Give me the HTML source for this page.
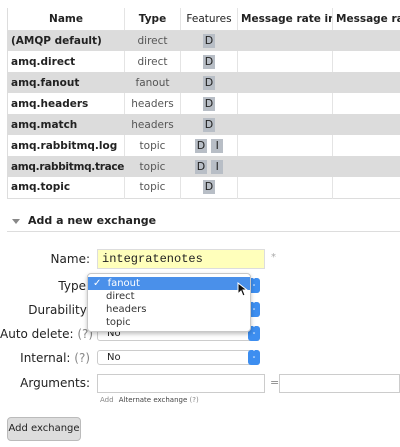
<!DOCTYPE html><html><head><style>
*{box-sizing:border-box}body{margin:0;width:400px;height:447px;overflow:hidden;background:#fff;font-family:"DejaVu Sans","Liberation Sans",sans-serif;color:#222;position:relative}
.a{position:absolute;white-space:nowrap}
table{position:absolute;left:7px;top:8px;border-collapse:collapse;font-size:10.5px;width:393px;table-layout:fixed}
td,th{height:21px;padding:0 3px;border-left:1px solid #e4e4e4;white-space:nowrap;overflow:hidden}
th{font-weight:bold;border-bottom:1px solid #ddd;height:22px}
td:first-child,th:first-child{text-align:left;font-weight:bold;border-left:1px solid #ddd}
th:first-child{text-align:center}
tr.g td{background:#dcdcdc;border-left-color:#dcdcdc}
td.t{text-align:center;color:#555}
td.f{text-align:center}
.b{display:inline-block;background:#b8bec6;padding:0 2px;line-height:14px;font-size:11px;font-weight:normal;color:#222;margin:0 2px;min-width:12px}
.l{font-size:12px;text-align:right;width:90px;left:0}
.sel{position:absolute;left:97px;width:163px;height:15px;border:1px solid #ccc;border-radius:3px;font-size:10px;padding-left:9px;line-height:13px;background:#fff}
.st{position:absolute;right:-1px;top:-1px;width:12px;height:15px;background:#3d8ef0;border-radius:3px;color:#fff;font-size:7px;text-align:center;line-height:7px}
.in{position:absolute;border:1px solid #ccc;height:19px;background:#fff}
</style></head><body>
<table>
<colgroup><col style="width:117px"><col style="width:56px"><col style="width:57px"><col style="width:95px"><col style="width:68px"></colgroup>
<tr style="background:#fff"><th>Name</th><th>Type</th><th style="font-weight:normal">Features</th><th>Message rate in</th><th style="text-align:left">Message rate out</th></tr>
<tr class="g"><td>(AMQP default)</td><td class="t">direct</td><td class="f"><span class="b">D</span></td><td></td><td></td></tr>
<tr><td>amq.direct</td><td class="t">direct</td><td class="f"><span class="b">D</span></td><td></td><td></td></tr>
<tr class="g"><td>amq.fanout</td><td class="t">fanout</td><td class="f"><span class="b">D</span></td><td></td><td></td></tr>
<tr><td>amq.headers</td><td class="t">headers</td><td class="f"><span class="b">D</span></td><td></td><td></td></tr>
<tr class="g"><td>amq.match</td><td class="t">headers</td><td class="f"><span class="b">D</span></td><td></td><td></td></tr>
<tr><td>amq.rabbitmq.log</td><td class="t">topic</td><td class="f"><span class="b">D</span><span class="b">I</span></td><td></td><td></td></tr>
<tr class="g"><td style="letter-spacing:-0.3px">amq.rabbitmq.trace</td><td class="t">topic</td><td class="f"><span class="b">D</span><span class="b">I</span></td><td></td><td></td></tr>
<tr style="border-bottom:1px solid #ddd"><td>amq.topic</td><td class="t">topic</td><td class="f"><span class="b">D</span></td><td></td><td></td></tr>
</table>
<div class="a" style="left:12px;top:219px;width:0;height:0;border-left:4px solid transparent;border-right:4px solid transparent;border-top:5px solid #888"></div>
<div class="a" style="left:28px;top:214px;font-size:11px;font-weight:bold">Add a new exchange</div>
<div class="a" style="left:7px;top:231px;width:393px;height:1px;background:#ddd"></div>
<div class="a l" style="top:252px">Name:</div>
<div class="in" style="left:97px;top:249px;width:168px;height:20px;background:#ffffbb;border-color:#ddd;font-family:'Liberation Mono',monospace;font-size:12px;padding:2px 4px">integratenotes</div>
<div class="a" style="left:271px;top:252px;font-size:10px;color:#aaa">*</div>
<div class="a l" style="top:279px">Type:</div>
<div class="a l" style="top:303px">Durability:</div>
<div class="a l" style="top:327px">Auto delete: <span style="color:#888">(?)</span></div>
<div class="a l" style="top:351px">Internal: <span style="color:#888">(?)</span></div>
<div class="a l" style="top:376px">Arguments:</div>
<div class="sel" style="top:278px"><div class="st">˄<br>˅</div></div>
<div class="sel" style="top:302px"><div class="st">˄<br>˅</div></div>
<div class="sel" style="top:326px">No<div class="st">˄<br>˅</div></div>
<div class="sel" style="top:350px">No<div class="st">˄<br>˅</div></div>
<div class="a" style="left:87px;top:273px;width:164px;height:59px;background:#fff;border:1px solid #c8c8c8;border-radius:4px;box-shadow:0 2px 4px rgba(0,0,0,.25);font-size:10px;color:#333">
<div style="margin-top:3px;height:13px;background:#4a90ea;color:#fff;line-height:13px;padding-left:5px">✓ <span style="margin-left:3px">fanout</span></div>
<div style="line-height:13px;padding-left:18px">direct</div>
<div style="line-height:13px;padding-left:18px">headers</div>
<div style="line-height:13px;padding-left:18px">topic</div></div>
<svg class="a" style="left:237px;top:282px" width="12" height="16"><path d="M1 1 L1 12 L4 9 L6 14 L8 13 L6 8 L10 8 Z" fill="#111" stroke="#fff" stroke-width="1"/></svg>
<div class="in" style="left:97px;top:374px;width:168px"></div>
<div class="a" style="left:270px;top:376px;font-size:11px;color:#888">=</div>
<div class="in" style="left:279px;top:374px;width:121px"></div>
<div class="a" style="left:100px;top:396px;font-size:7px;color:#888">Add <span style="color:#444;margin-left:3px">Alternate exchange</span> (?)</div>
<div class="a" style="left:7px;top:417px;width:74px;height:24px;background:#ddd;border:1px solid #bbb;border-radius:4px;font-size:10px;line-height:22px;text-align:center">Add exchange</div>
</body></html>
